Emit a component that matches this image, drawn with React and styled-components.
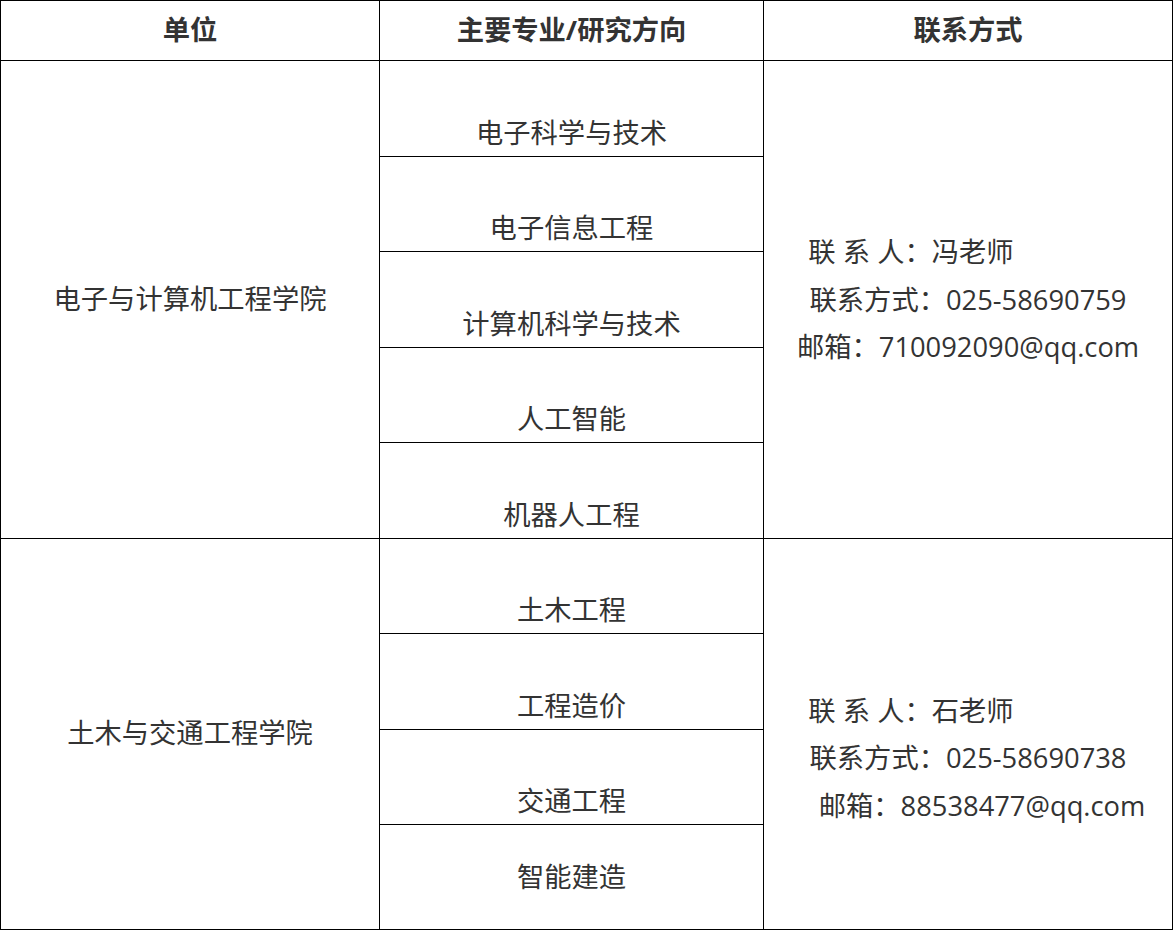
import React from 'react';
import styled, { createGlobalStyle } from 'styled-components';

const GlobalStyle = createGlobalStyle`
  html, body {
    margin: 0;
    padding: 0;
    background: #ffffff;
  }
  body {
    font-family: "Open Sans", "Noto Sans CJK SC", sans-serif;
    color: #333333;
  }
`;

const groups = [
  {
    unit: '电子与计算机工程学院',
    majors: ['电子科学与技术', '电子信息工程', '计算机科学与技术', '人工智能', '机器人工程'],
    contactTop: 0,
    contact: [
      { text: '联 系 人：冯老师', right: 114 },
      { text: '联系方式：025-58690759' },
      { text: '邮箱：710092090@qq.com' },
    ],
  },
  {
    unit: '土木与交通工程学院',
    majors: ['土木工程', '工程造价', '交通工程', '智能建造'],
    contactTop: 48,
    contact: [
      { text: '联 系 人：石老师', right: 114 },
      { text: '联系方式：025-58690738' },
      { text: '邮箱：88538477@qq.com', left: 28 },
    ],
  },
];

const App = () => {
  return (
    <>
      <GlobalStyle />
      <Table>
        <colgroup>
          <col style={{ width: 379 }} />
          <col style={{ width: 384 }} />
          <col style={{ width: 409 }} />
        </colgroup>
        <thead>
          <tr>
            <HeadCell>单位</HeadCell>
            <HeadCell>主要专业/研究方向</HeadCell>
            <HeadCell>联系方式</HeadCell>
          </tr>
        </thead>
        <tbody>
          {groups.map((group, gi) =>
            group.majors.map((major, mi) => {
              const isLast = gi === groups.length - 1 && mi === group.majors.length - 1;
              return (
                <tr key={`${gi}-${mi}`}>
                  {mi === 0 && <UnitCell rowSpan={group.majors.length}>{group.unit}</UnitCell>}
                  <MajorCell $tall={isLast}>{major}</MajorCell>
                  {mi === 0 && (
                    <ContactCell rowSpan={group.majors.length} $top={group.contactTop}>
                      {group.contact.map((line) => (
                        <ContactLine key={line.text} $left={line.left} $right={line.right}>
                          {line.text}
                        </ContactLine>
                      ))}
                    </ContactCell>
                  )}
                </tr>
              );
            })
          )}
        </tbody>
      </Table>
    </>
  );
};

const Table = styled.table`
  width: 1172px;
  table-layout: fixed;
  border-collapse: collapse;
  font-size: 27.3px;
`;

const Cell = styled.td`
  border: 1px solid #000000;
  padding: 0;
  text-align: center;
  vertical-align: middle;
`;

const HeadCell = styled(Cell).attrs({ as: 'th' })`
  height: 59px;
  font-weight: 700;
  color: #333333;
  line-height: 1.4;
`;

const UnitCell = styled(Cell)`
  line-height: 1.5;
`;

const MajorCell = styled(Cell)`
  height: ${(p) => (p.$tall ? '104px' : '92.5px')};
  vertical-align: ${(p) => (p.$tall ? 'middle' : 'bottom')};
  padding-bottom: ${(p) => (p.$tall ? '0' : '2px')};
  line-height: 1.5;
`;

const ContactCell = styled(Cell)`
  line-height: 47.5px;
  padding-top: ${(p) => p.$top || 0}px;
`;

const ContactLine = styled.div`
  padding-left: ${(p) => p.$left || 0}px;
  padding-right: ${(p) => p.$right || 0}px;
`;

export default App;
